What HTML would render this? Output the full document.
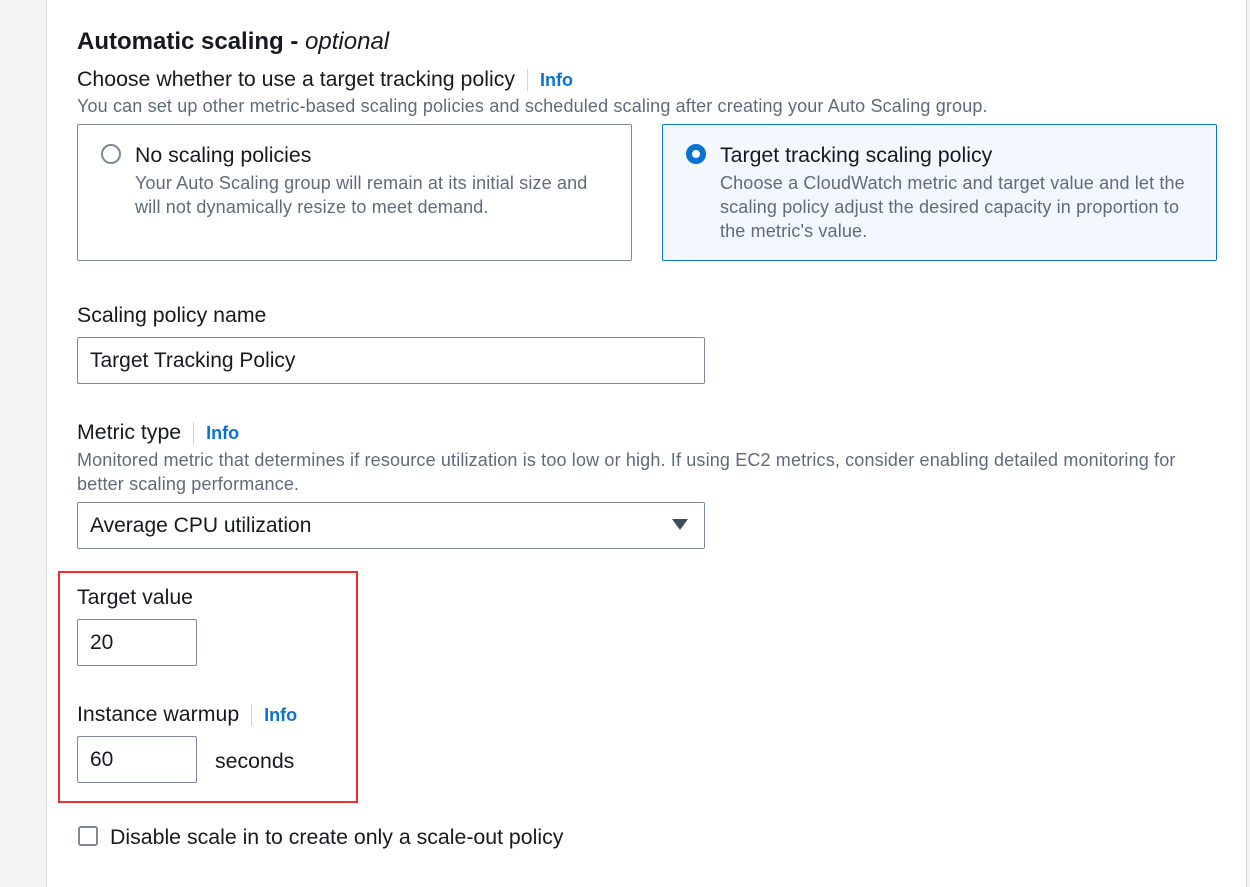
<!DOCTYPE html>
<html><head><meta charset="utf-8"><style>
body{margin:0;width:1250px;height:887px;background:#fff;font-family:"Liberation Sans",sans-serif;position:relative;overflow:hidden;color:#16191f}
.a{position:absolute;white-space:nowrap}
.l{font-size:21.3px;color:#16191f}
.d{font-size:18px;letter-spacing:0.15px;color:#5f6b7a;line-height:24px}
.info{color:#0972d3;font-weight:bold;font-size:18px;letter-spacing:0}
.sep{display:inline-block;width:1px;height:22px;background:#d1d5db;vertical-align:middle;margin:0 12px 0 12px}
.box{position:absolute;border:1px solid #7d8998;border-radius:2px;box-sizing:border-box}
.inp{font-size:21px;padding-left:12px;display:flex;align-items:center}
</style></head><body>
<div class="a" style="left:0;top:0;width:46px;height:887px;background:#f2f3f3;border-right:1px solid #d5dbdb"></div>
<div class="a" style="left:1246px;top:0;width:4px;height:887px;background:#f2f3f3;border-left:1px solid #d5dbdb"></div>

<div class="a" style="left:77px;top:28px;font-size:24px;font-weight:bold">Automatic scaling - <i style="font-weight:normal">optional</i></div>
<div class="a l" style="left:77px;top:67px">Choose whether to use a target tracking policy<span class="sep"></span><span class="info">Info</span></div>
<div class="a d" style="left:77px;top:94px">You can set up other metric-based scaling policies and scheduled scaling after creating your Auto Scaling group.</div>

<div class="box" style="left:77px;top:124px;width:555px;height:137px"></div>
<div class="a" style="left:101px;top:144px;width:20px;height:20px;border:2px solid #7d8998;border-radius:50%;box-sizing:border-box"></div>
<div class="a l" style="left:135px;top:143px">No scaling policies</div>
<div class="a d" style="left:135px;top:171px">Your Auto Scaling group will remain at its initial size and<br>will not dynamically resize to meet demand.</div>

<div class="box" style="left:662px;top:124px;width:555px;height:137px;border-color:#0972d3;background:#f2f8fd"></div>
<div class="a" style="left:686px;top:144px;width:20px;height:20px;border:6px solid #0972d3;border-radius:50%;box-sizing:border-box;background:#fff"></div>
<div class="a l" style="left:720px;top:143px">Target tracking scaling policy</div>
<div class="a d" style="left:720px;top:171px">Choose a CloudWatch metric and target value and let the<br>scaling policy adjust the desired capacity in proportion to<br>the metric's value.</div>

<div class="a l" style="left:77px;top:303px">Scaling policy name</div>
<div class="box inp" style="left:77px;top:337px;width:628px;height:47px">Target Tracking Policy</div>

<div class="a l" style="left:77px;top:420px">Metric type<span class="sep"></span><span class="info">Info</span></div>
<div class="a d" style="left:77px;top:448px">Monitored metric that determines if resource utilization is too low or high. If using EC2 metrics, consider enabling detailed monitoring for<br>better scaling performance.</div>
<div class="box inp" style="left:77px;top:502px;width:628px;height:47px">Average CPU utilization</div>
<div class="a" style="left:672px;top:519px;width:0;height:0;border-left:8px solid transparent;border-right:8px solid transparent;border-top:11px solid #414d5c"></div>

<div class="a" style="left:58px;top:571px;width:300px;height:232px;border:2px solid #ee3124;box-sizing:border-box"></div>
<div class="a l" style="left:77px;top:585px">Target value</div>
<div class="box inp" style="left:77px;top:619px;width:120px;height:47px">20</div>
<div class="a l" style="left:77px;top:702px">Instance warmup<span class="sep"></span><span class="info">Info</span></div>
<div class="box inp" style="left:77px;top:736px;width:120px;height:47px">60</div>
<div class="a l" style="left:215px;top:749px">seconds</div>

<div class="a" style="left:78px;top:826px;width:20px;height:20px;border:2px solid #7d8998;border-radius:3px;box-sizing:border-box"></div>
<div class="a l" style="left:110px;top:825px">Disable scale in to create only a scale-out policy</div>
</body></html>
